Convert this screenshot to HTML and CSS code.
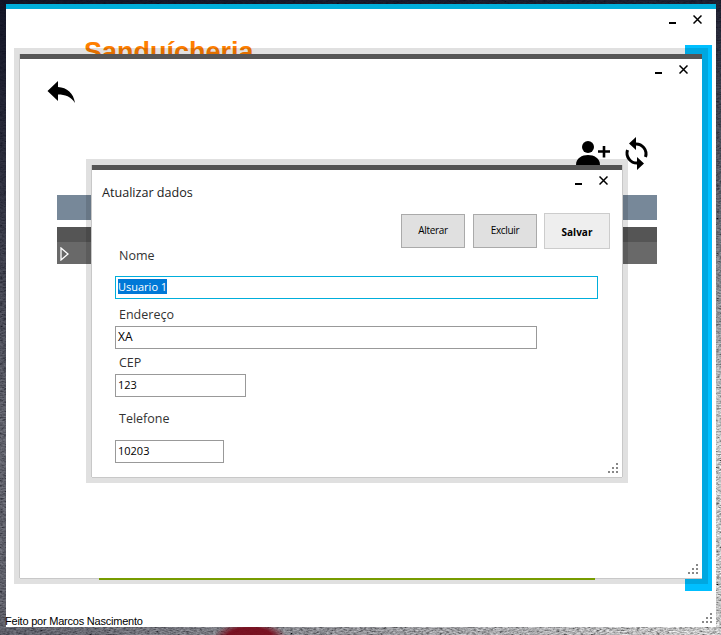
FILE: index.html
```html
<!DOCTYPE html>
<html lang="en">
<head>
    <meta charset="UTF-8">
    <meta name="viewport" content="width=device-width, initial-scale=1.0">
    <title>Sanduicheria</title>
    <link rel="stylesheet" href="styles.css">
</head>
<body>
    <svg class="wallpaper" width="721" height="635">
        <filter id="grain">
            <feTurbulence type="fractalNoise" baseFrequency="0.3 0.7" numOctaves="3" seed="4" />
            <feColorMatrix type="saturate" values="0" />
            <feComponentTransfer>
                <feFuncR type="linear" slope="1.8" intercept="-0.35" />
                <feFuncG type="linear" slope="1.8" intercept="-0.35" />
                <feFuncB type="linear" slope="1.8" intercept="-0.35" />
                <feFuncA type="linear" slope="0" intercept="1" />
            </feComponentTransfer>
        </filter>
        <rect width="721" height="635" filter="url(#grain)" />
    </svg>
    <div class="wallpaper-tint"></div>
    <svg class="defs">
        <symbol id="close" viewBox="0 0 9 9">
            <path d="M0.5 0.5 L8.5 8.5 M8.5 0.5 L0.5 8.5" stroke="#000" stroke-width="1.5" fill="none" />
        </symbol>
        <symbol id="grip" viewBox="0 0 10 10">
            <path d="M8 0h2v2H8z M4 4h2v2H4z M8 4h2v2H8z M0 8h2v2H0z M4 8h2v2H4z M8 8h2v2H8z" fill="#888" />
        </symbol>
    </svg>

    <div class="window window-main">
        <div class="controls">
            <span class="minimize"></span>
            <svg class="close"><use href="#close" /></svg>
        </div>
        <h1 class="brand">Sanduícheria</h1>
        <div class="footer">Feito por Marcos Nascimento</div>
        <svg class="grip"><use href="#grip" /></svg>
    </div>

    <div class="accent"></div>

    <div class="window window-users">
        <div class="controls">
            <span class="minimize"></span>
            <svg class="close"><use href="#close" /></svg>
        </div>
        <svg class="icon-back" width="28" height="22" viewBox="0 0 28 22">
            <path d="M0.5 10 L11 0 V6 C20 6.5 26.5 12 28 22 C24 15.5 18 13.5 11 13.5 V20 Z" fill="#000" />
        </svg>
        <div class="toolbar">
            <svg class="icon-add" width="34" height="24" viewBox="0 0 34 24">
                <circle cx="12" cy="6" r="6" fill="#000" />
                <path d="M0 24 C0 17 6 14 12 14 C18 14 24 17 24 24 Z" fill="#000" />
                <path d="M22 10.5 H34 M28 5 V16.500" stroke="#000" stroke-width="2.6" fill="none" />
            </svg>
            <svg class="icon-sync" width="25" height="33" viewBox="0 0 25 33">
                <path d="M11 7 A10 10 0 0 1 21.500 20" stroke="#000" stroke-width="3" fill="none" />
                <path d="M14 26 A10 10 0 0 1 3.500 13" stroke="#000" stroke-width="3" fill="none" />
                <path d="M12 0 V13 L5 6.500 Z M13 20 V33 L20 26.500 Z" fill="#000" />
            </svg>
        </div>
        <div class="grid-head"></div>
        <div class="grid-top"></div>
        <div class="grid-row">
            <svg width="9" height="14" viewBox="0 0 9 14">
                <path d="M1 1 L8 7 L1 13 Z" stroke="#fff" stroke-width="1.3" fill="none" />
            </svg>
        </div>
        <div class="progress"></div>
        <svg class="grip"><use href="#grip" /></svg>
    </div>

    <div class="window window-dialog">
        <div class="controls">
            <span class="minimize"></span>
            <svg class="close"><use href="#close" /></svg>
        </div>
        <div class="dialog-title">Atualizar dados</div>
        <div class="actions">
            <button class="btn">Alterar</button>
            <button class="btn">Excluir</button>
            <button class="btn btn-save">Salvar</button>
        </div>
        <div class="form">
            <label class="label label-nome">Nome</label>
            <div class="field field-focus field-nome"><span class="selected">Usuario 1</span></div>
            <label class="label label-endereco">Endereço</label>
            <div class="field field-endereco">XA</div>
            <label class="label label-cep">CEP</label>
            <div class="field field-cep">123</div>
            <label class="label label-telefone">Telefone</label>
            <div class="field field-telefone">10203</div>
        </div>
        <svg class="grip"><use href="#grip" /></svg>
    </div>
</body>
</html>
```

FILE: styles.css
```css
* {
  box-sizing: border-box;
}

body {
  margin: 0;
  width: 721px;
  height: 635px;
  overflow: hidden;
  position: relative;
  background-color: #777;
  font-family: "Open Sans", sans-serif;
}

.wallpaper {
  position: absolute;
  top: 0;
  left: 0;
}

.wallpaper-tint {
  position: absolute;
  top: 0;
  left: 0;
  width: 721px;
  height: 635px;
  background:
    radial-gradient(ellipse 36px 14px at 250px 636px, rgba(120, 12, 28, 0.95) 60%, rgba(120, 12, 28, 0) 100%),
    linear-gradient(90deg, rgba(10, 12, 30, 0.55) 0, rgba(10, 12, 30, 0.55) 10px, rgba(10, 12, 30, 0) 700px),
    linear-gradient(180deg, rgba(10, 12, 30, 0.9) 0, rgba(10, 12, 30, 0.55) 200px, rgba(10, 12, 30, 0) 420px);
}

.defs {
  position: absolute;
  width: 0;
  height: 0;
}

/* windows */
.window {
  position: absolute;
  background-color: #fff;
}

.window-main {
  left: 6px;
  top: 4px;
  width: 710px;
  height: 623px;
  border-top: 5px solid #00aedb;
}

.window-users {
  left: 20px;
  top: 54px;
  width: 682px;
  height: 524px;
  border-top: 5px solid #555;
  box-shadow: -1px 0 0 #c8c8c8, 0 1px 0 #c8c8c8, 0 0 0 6px rgba(0, 0, 0, 0.12);
}

.window-dialog {
  left: 92px;
  top: 165px;
  width: 530px;
  height: 312px;
  border-top: 5px solid #555;
  box-shadow: -1px 0 0 #c8c8c8, 1px 0 0 #c8c8c8, 0 1px 0 #c8c8c8, 0 0 0 6px rgba(0, 0, 0, 0.12);
}

.accent {
  position: absolute;
  left: 685px;
  top: 45px;
  width: 27px;
  height: 546px;
  background-color: #00bfff;
}

.controls {
  display: flex;
  justify-content: flex-end;
  align-items: flex-end;
  gap: 17px;
  padding: 6px 14px 0 0;
}

.minimize {
  width: 7px;
  height: 2px;
  background-color: #000;
}

.close {
  width: 9px;
  height: 9px;
}

.grip {
  position: absolute;
  right: 4px;
  bottom: 4px;
  width: 10px;
  height: 10px;
}

/* main window */
.brand {
  margin: 14px 0 0 78px;
  font-family: "Liberation Sans", sans-serif;
  font-size: 27px;
  font-weight: bold;
  line-height: 28px;
  color: #ff7f00;
}

.footer {
  position: absolute;
  left: -1px;
  bottom: -2px;
  font-family: "Liberation Sans", sans-serif;
  font-size: 11px;
  letter-spacing: -0.22px;
  line-height: 15px;
  color: #000;
}

/* users window */
.icon-back {
  display: block;
  margin: 7px 0 0 27px;
}

.toolbar {
  display: flex;
  justify-content: flex-end;
  gap: 14px;
  margin-top: 34px;
  padding-right: 53px;
}

.icon-add {
  margin-top: 4px;
}

.grid-head,
.grid-top,
.grid-row {
  margin-left: 37px;
  width: 600px;
}

.grid-head {
  height: 25px;
  margin-top: 25px;
  background-color: #778899;
}

.grid-top {
  height: 15px;
  margin-top: 7px;
  background-color: #555;
}

.grid-row {
  display: flex;
  align-items: center;
  height: 22px;
  padding: 1px 0 0 3px;
  background-color: #696969;
}

.progress {
  position: absolute;
  left: 79px;
  bottom: -2px;
  width: 496px;
  height: 2px;
  background-color: #779c00;
}

/* dialog */
.dialog-title {
  margin: 0 0 0 10px;
  font-size: 12.6px;
  line-height: 16px;
  color: #222;
}

.actions {
  display: flex;
  justify-content: flex-end;
  align-items: center;
  gap: 8px;
  margin-top: 12px;
  padding-right: 12px;
}

.btn {
  width: 64px;
  height: 34px;
  padding: 0 0 2px;
  border: 1px solid #aaa;
  background-color: #e0e0e0;
  font-family: "Open Sans", sans-serif;
  font-size: 10px;
  letter-spacing: -0.3px;
  color: #000;
}

.btn-save {
  width: 66px;
  height: 36px;
  margin-left: -1px;
  padding: 2px 0 0;
  border-color: #ccc;
  background-color: #eee;
  font-weight: bold;
  letter-spacing: 0;
}

.form {
  display: flex;
  flex-direction: column;
  align-items: flex-start;
  padding-left: 23px;
}

.label {
  margin-left: 4px;
  font-size: 12.5px;
  line-height: 18px;
  color: #333;
}

.field {
  height: 23px;
  padding-left: 2px;
  border: 1px solid #999;
  font-size: 11px;
  line-height: 20px;
  color: #000;
}

.selected {
  background-color: #0078d7;
  color: #fff;
}

.field-focus {
  border-color: #00aedb;
}

.label-nome {
  margin-top: -2px;
}

.field-nome {
  width: 483px;
  margin-top: 11px;
}

.label-endereco {
  margin-top: 7px;
}

.field-endereco {
  width: 422px;
  margin-top: 2px;
  font-size: 12px;
}

.label-cep {
  margin-top: 5px;
}

.field-cep {
  width: 131px;
  margin-top: 2px;
}

.label-telefone {
  margin-top: 13px;
}

.field-telefone {
  width: 109px;
  margin-top: 12px;
}
```
